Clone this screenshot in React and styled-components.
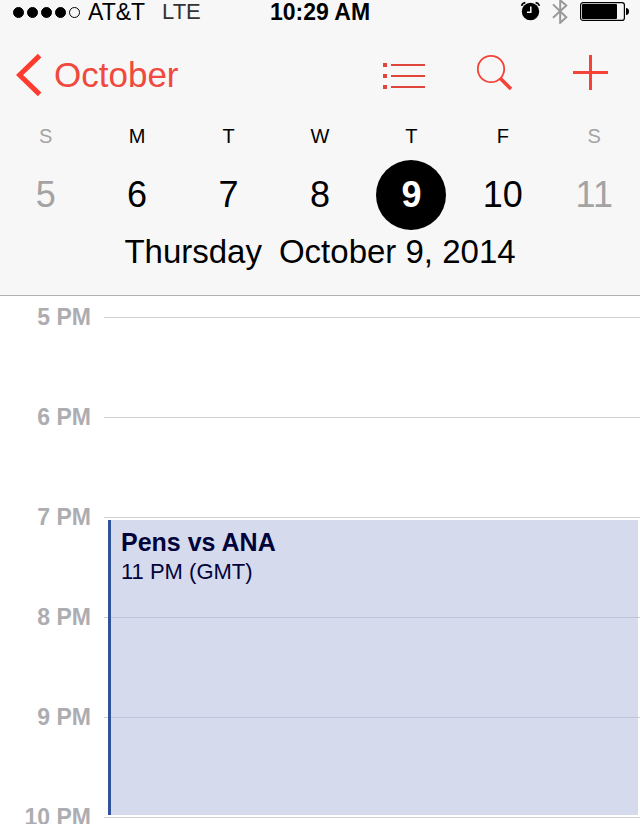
import React, { useState } from "react";
import styled, { createGlobalStyle } from "styled-components";

const HOUR_HEIGHT = 100;
const FIRST_HOUR = 17;

const days = [
  { letter: "S", number: 5, weekend: true },
  { letter: "M", number: 6 },
  { letter: "T", number: 7 },
  { letter: "W", number: 8 },
  { letter: "T", number: 9 },
  { letter: "F", number: 10 },
  { letter: "S", number: 11, weekend: true },
];

const names = ["Sunday", "Monday", "Tuesday", "Wednesday", "Thursday", "Friday", "Saturday"];

const hours = [17, 18, 19, 20, 21, 22];

const events = [
  { title: "Pens vs ANA", detail: "11 PM (GMT)", start: 19, end: 22 },
];

export default () => {
  const [selected, setSelected] = useState(4);

  return (
    <Screen>
      <GlobalStyle />
      <Header>
        <StatusBar />
        <NavBar />
        <Week>
          {days.map((day, i) => (
            <Day key={day.number}>
              <Letter $muted={day.weekend}>{day.letter}</Letter>
              <Number
                $muted={day.weekend}
                $selected={i === selected}
                onClick={() => setSelected(i)}
              >
                {day.number}
              </Number>
            </Day>
          ))}
        </Week>
        <FullDate>
          <span>{names[selected]}</span>
          <span>{`October ${days[selected].number}, 2014`}</span>
        </FullDate>
      </Header>
      <Timeline>
        <Schedule>
          {hours.map((hour) => (
            <Hour key={hour}>
              <HourLabel>{`${hour - 12} PM`}</HourLabel>
              <HourLine />
            </Hour>
          ))}
          {events.map((event) => (
            <Event key={event.title} $start={event.start} $length={event.end - event.start}>
              <EventTitle>{event.title}</EventTitle>
              <EventDetail>{event.detail}</EventDetail>
            </Event>
          ))}
        </Schedule>
      </Timeline>
    </Screen>
  );
};

function StatusBar() {
  return (
    <Status>
      <Carrier>
        <Signal>
          <Dot $on />
          <Dot $on />
          <Dot $on />
          <Dot $on />
          <Dot />
        </Signal>
        <span>AT&amp;T</span>
        <Network>LTE</Network>
      </Carrier>
      <Clock>10:29 AM</Clock>
      <Indicators>
        <svg width="20" height="24" viewBox="0 0 20 24" aria-label="Alarm">
          <circle cx="10.5" cy="11.5" r="8.7" fill="#000" />
          <path d="M10.8 6.5V12.2H7" fill="none" stroke="#f8f8f8" strokeWidth="1.5" />
          <path d="M1.6 5.8Q2.2 3 5.4 2.6M19.4 5.8Q18.8 3 15.6 2.6" fill="none" stroke="#000" strokeWidth="1.6" />
        </svg>
        <svg width="16" height="24" viewBox="0 0 16 24" aria-label="Bluetooth">
          <path
            d="M1 4.4L14.3 17.2L8.2 22.8V0.2L14.3 5.6L1 17.8"
            fill="none"
            stroke="#999"
            strokeWidth="2"
          />
        </svg>
        <svg width="50" height="24" viewBox="0 0 50 24" aria-label="Battery">
          <rect x="0.6" y="2.6" width="43.8" height="17.8" rx="2.5" fill="none" stroke="#000" strokeWidth="1.2" />
          <rect x="2" y="4" width="35" height="15" rx="1" fill="#000" />
          <path d="M46 8Q49 8.4 49 11.5Q49 14.6 46 15Z" fill="#000" />
        </svg>
      </Indicators>
    </Status>
  );
}

function NavBar() {
  return (
    <Nav>
      <Back href="#october">
        <svg width="26" height="44" viewBox="0 0 26 44" aria-hidden="true">
          <path d="M23.6 2.6L3.6 22L23.6 41.4" fill="none" stroke="#ff3b30" strokeWidth="5" />
        </svg>
        October
      </Back>
      <Actions>
        <IconButton aria-label="List">
          <svg width="44" height="44" viewBox="0 0 44 44">
            <path d="M1 10H5V14H1ZM1 21H5V25H1ZM1 32H5V36H1Z" fill="#e0453a" />
            <path d="M9 12H43M9 23H43M9 34H43" stroke="#e0453a" strokeWidth="2" />
          </svg>
        </IconButton>
        <IconButton aria-label="Search">
          <svg width="44" height="44" viewBox="0 0 44 44" fill="none" stroke="#f54337">
            <circle cx="15" cy="16" r="13.2" strokeWidth="1.8" />
            <path d="M24.2 25.2L35 36" strokeWidth="3.6" />
          </svg>
        </IconButton>
        <IconButton aria-label="Add event">
          <svg width="44" height="44" viewBox="0 0 44 44">
            <path d="M3 19.5H38M20.5 2V37" stroke="#f54337" strokeWidth="3" />
          </svg>
        </IconButton>
      </Actions>
    </Nav>
  );
}

const GlobalStyle = createGlobalStyle`
  * {
    box-sizing: border-box;
  }
  body {
    margin: 0;
    background: #fff;
    color: #000;
    font-family: "Liberation Sans", Arial, sans-serif;
  }
  button {
    border: 0;
    padding: 0;
    background: none;
    font-family: inherit;
    cursor: pointer;
  }
  svg {
    display: block;
  }
`;

const Screen = styled.div`
  display: flex;
  flex-direction: column;
  height: 100vh;
`;

const Header = styled.header`
  flex: none;
  background: #f7f7f7;
  border-bottom: 1px solid #b2b2b2;
  padding-bottom: 25px;
`;

const Status = styled.div`
  display: grid;
  grid-template-columns: 1fr auto 1fr;
  align-items: center;
  height: 24px;
  padding: 0 10px;
  font-size: 23px;
  line-height: 24px;
`;

const Carrier = styled.div`
  display: flex;
  align-items: center;
  padding-left: 3px;
`;

const Signal = styled.div`
  display: flex;
  gap: 3px;
  margin-right: 8px;
`;

const Dot = styled.i`
  width: 11px;
  height: 11px;
  border: 1px solid #000;
  border-radius: 50%;
  background: ${(props) => (props.$on ? "#000" : "transparent")};
`;

const Network = styled.span`
  margin-left: 17px;
  font-size: 22px;
  color: #333;
`;

const Clock = styled.time`
  font-weight: bold;
`;

const Indicators = styled.div`
  display: flex;
  justify-content: flex-end;
  gap: 12px;
`;

const Nav = styled.nav`
  display: flex;
  align-items: center;
  justify-content: space-between;
  height: 102px;
  padding: 0 26px 0 16px;
`;

const Back = styled.a`
  display: flex;
  align-items: center;
  gap: 12px;
  color: #f0493e;
  font-size: 35px;
  line-height: 40px;
  text-decoration: none;
`;

const Actions = styled.div`
  display: flex;
  gap: 50px;
`;

const IconButton = styled.button`
  width: 44px;
  height: 44px;
`;

const Week = styled.div`
  display: grid;
  grid-template-columns: repeat(7, 1fr);
`;

const Day = styled.div`
  display: flex;
  flex-direction: column;
  align-items: center;
  gap: 14px;
`;

const Letter = styled.span`
  font-size: 20px;
  line-height: 20px;
  color: ${(props) => (props.$muted ? "#a3a3a3" : "#000")};
`;

const Number = styled.button`
  width: 70px;
  height: 70px;
  border-radius: 50%;
  font-size: 36px;
  line-height: 70px;
  font-weight: ${(props) => (props.$selected ? "bold" : "normal")};
  background: ${(props) => (props.$selected ? "#000" : "transparent")};
  color: ${(props) => (props.$selected ? "#fff" : props.$muted ? "#a3a3a3" : "#000")};
`;

const FullDate = styled.div`
  display: flex;
  justify-content: center;
  gap: 17px;
  padding-top: 4px;
  font-size: 33px;
  line-height: 36px;
`;

const Timeline = styled.main`
  flex: 1;
  min-height: 0;
  overflow-y: auto;
  scrollbar-width: none;
  padding-top: 10px;
`;

const Schedule = styled.div`
  position: relative;
`;

const Hour = styled.div`
  display: flex;
  align-items: flex-start;
  gap: 13px;
  height: ${HOUR_HEIGHT}px;
`;

const HourLabel = styled.span`
  width: 91px;
  text-align: right;
  font-size: 23px;
  line-height: 23px;
  font-weight: bold;
  color: #adadb1;
`;

const HourLine = styled.div`
  flex: 1;
  height: 1px;
  margin-top: 11px;
  background: #d2d2d4;
`;

// Events lie over the hour lines, which show through the tint
const Event = styled.article`
  position: absolute;
  left: 108px;
  right: 2px;
  top: ${(props) => (props.$start - FIRST_HOUR) * HOUR_HEIGHT + 14}px;
  height: ${(props) => props.$length * HOUR_HEIGHT - 5}px;
  padding: 7px 10px;
  border-left: 3px solid #2f529b;
  background: rgba(172, 184, 220, 0.5);
  color: #03033c;
`;

const EventTitle = styled.h2`
  margin: 0;
  font-size: 25px;
  line-height: 30px;
`;

const EventDetail = styled.p`
  margin: 0;
  font-size: 22px;
  line-height: 30px;
`;
